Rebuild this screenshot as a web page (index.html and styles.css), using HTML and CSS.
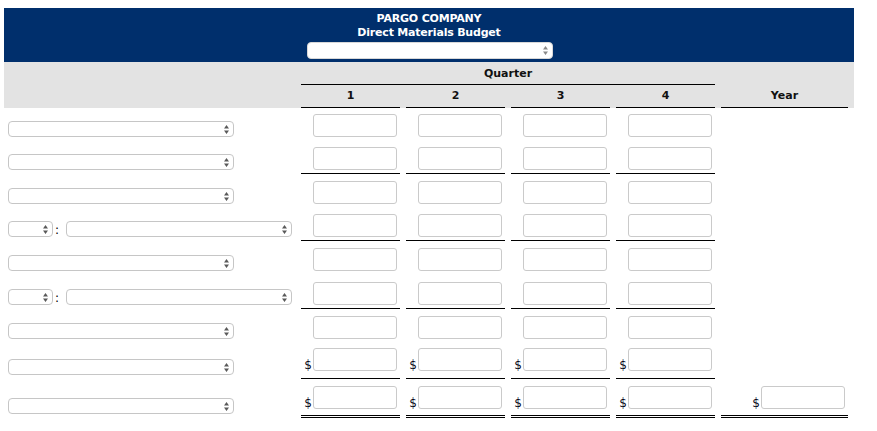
FILE: index.html
```html
<!DOCTYPE html>
<html lang="en">
<head>
<meta charset="utf-8">
<title>PARGO COMPANY - Direct Materials Budget</title>
<link rel="stylesheet" href="styles.css">
</head>
<body>
<div class="sheet">
  <div class="title-band">
    <div class="title-line">PARGO COMPANY</div>
    <div class="title-line">Direct Materials Budget</div>
    <div class="sel sel-title"><svg class="arr" width="5" height="9" viewBox="0 0 5 9"><path d="M2.5 0L5 3.6H0Z M0 5.4H5L2.5 9Z"/></svg></div>
  </div>

  <div class="grid head-band">
    <div class="quarter">Quarter</div>
    <div class="colhead c2">1</div>
    <div class="colhead c3">2</div>
    <div class="colhead c4">3</div>
    <div class="colhead c5">4</div>
    <div class="colhead c6">Year</div>
  </div>

  <!-- row 1 -->
  <div class="grid row pt6">
    <div class="lab"><div class="sel w-wide"><svg class="arr" width="5" height="9" viewBox="0 0 5 9"><path d="M2.5 0L5 3.6H0Z M0 5.4H5L2.5 9Z"/></svg></div></div>
    <div class="val"><input class="box" type="text"></div>
    <div class="val"><input class="box" type="text"></div>
    <div class="val"><input class="box" type="text"></div>
    <div class="val"><input class="box" type="text"></div>
    <div class="val yr"></div>
  </div>

  <!-- row 2 -->
  <div class="grid row pt6 rule">
    <div class="lab"><div class="sel w-wide"><svg class="arr" width="5" height="9" viewBox="0 0 5 9"><path d="M2.5 0L5 3.6H0Z M0 5.4H5L2.5 9Z"/></svg></div></div>
    <div class="val"><input class="box" type="text"></div>
    <div class="val"><input class="box" type="text"></div>
    <div class="val"><input class="box" type="text"></div>
    <div class="val"><input class="box" type="text"></div>
    <div class="val yr"></div>
  </div>

  <!-- row 3 -->
  <div class="grid row pt7">
    <div class="lab"><div class="sel w-wide"><svg class="arr" width="5" height="9" viewBox="0 0 5 9"><path d="M2.5 0L5 3.6H0Z M0 5.4H5L2.5 9Z"/></svg></div></div>
    <div class="val"><input class="box" type="text"></div>
    <div class="val"><input class="box" type="text"></div>
    <div class="val"><input class="box" type="text"></div>
    <div class="val"><input class="box" type="text"></div>
    <div class="val yr"></div>
  </div>

  <!-- row 4 -->
  <div class="grid row pt6 rule">
    <div class="lab">
      <div class="sel w-small"><svg class="arr" width="5" height="9" viewBox="0 0 5 9"><path d="M2.5 0L5 3.6H0Z M0 5.4H5L2.5 9Z"/></svg></div>
      <span class="colon">:</span>
      <div class="sel w-wide"><svg class="arr" width="5" height="9" viewBox="0 0 5 9"><path d="M2.5 0L5 3.6H0Z M0 5.4H5L2.5 9Z"/></svg></div>
    </div>
    <div class="val"><input class="box" type="text"></div>
    <div class="val"><input class="box" type="text"></div>
    <div class="val"><input class="box" type="text"></div>
    <div class="val"><input class="box" type="text"></div>
    <div class="val yr"></div>
  </div>

  <!-- row 5 -->
  <div class="grid row pt7">
    <div class="lab"><div class="sel w-wide"><svg class="arr" width="5" height="9" viewBox="0 0 5 9"><path d="M2.5 0L5 3.6H0Z M0 5.4H5L2.5 9Z"/></svg></div></div>
    <div class="val"><input class="box" type="text"></div>
    <div class="val"><input class="box" type="text"></div>
    <div class="val"><input class="box" type="text"></div>
    <div class="val"><input class="box" type="text"></div>
    <div class="val yr"></div>
  </div>

  <!-- row 6 -->
  <div class="grid row pt7 rule">
    <div class="lab">
      <div class="sel w-small"><svg class="arr" width="5" height="9" viewBox="0 0 5 9"><path d="M2.5 0L5 3.6H0Z M0 5.4H5L2.5 9Z"/></svg></div>
      <span class="colon">:</span>
      <div class="sel w-wide"><svg class="arr" width="5" height="9" viewBox="0 0 5 9"><path d="M2.5 0L5 3.6H0Z M0 5.4H5L2.5 9Z"/></svg></div>
    </div>
    <div class="val"><input class="box" type="text"></div>
    <div class="val"><input class="box" type="text"></div>
    <div class="val"><input class="box" type="text"></div>
    <div class="val"><input class="box" type="text"></div>
    <div class="val yr"></div>
  </div>

  <!-- row 7 -->
  <div class="grid row pt7">
    <div class="lab"><div class="sel w-wide"><svg class="arr" width="5" height="9" viewBox="0 0 5 9"><path d="M2.5 0L5 3.6H0Z M0 5.4H5L2.5 9Z"/></svg></div></div>
    <div class="val"><input class="box" type="text"></div>
    <div class="val"><input class="box" type="text"></div>
    <div class="val"><input class="box" type="text"></div>
    <div class="val"><input class="box" type="text"></div>
    <div class="val yr"></div>
  </div>

  <!-- row 8 -->
  <div class="grid row pt5 rule money">
    <div class="lab"><div class="sel w-wide"><svg class="arr" width="5" height="9" viewBox="0 0 5 9"><path d="M2.5 0L5 3.6H0Z M0 5.4H5L2.5 9Z"/></svg></div></div>
    <div class="val"><span class="cur">$</span><input class="box" type="text"></div>
    <div class="val"><span class="cur">$</span><input class="box" type="text"></div>
    <div class="val"><span class="cur">$</span><input class="box" type="text"></div>
    <div class="val"><span class="cur">$</span><input class="box" type="text"></div>
    <div class="val yr"></div>
  </div>

  <!-- row 9 -->
  <div class="grid row pt7 total">
    <div class="lab"><div class="sel w-wide"><svg class="arr" width="5" height="9" viewBox="0 0 5 9"><path d="M2.5 0L5 3.6H0Z M0 5.4H5L2.5 9Z"/></svg></div></div>
    <div class="val"><span class="cur">$</span><input class="box" type="text"></div>
    <div class="val"><span class="cur">$</span><input class="box" type="text"></div>
    <div class="val"><span class="cur">$</span><input class="box" type="text"></div>
    <div class="val"><span class="cur">$</span><input class="box" type="text"></div>
    <div class="val yr"><span class="cur">$</span><input class="box" type="text"></div>
  </div>
</div>
</body>
</html>
```

FILE: styles.css
```css
body {
  margin: 0;
  background: #ffffff;
  color: #000000;
  font-family: "DejaVu Sans", Verdana, sans-serif;
}

.sheet {
  margin: 8px 0 0 4px;
  width: 850px;
}

.title-band {
  background: #002f6c;
  color: #ffffff;
  height: 54px;
  box-sizing: border-box;
  padding-top: 4px;
  display: flex;
  flex-direction: column;
  align-items: center;
}

.title-line {
  font-size: 11px;
  font-weight: bold;
  line-height: 14px;
  letter-spacing: -0.2px;
}

.sel {
  box-sizing: border-box;
  height: 16px;
  border: 1px solid #c6c6c6;
  border-radius: 4px;
  background: #ffffff;
  display: flex;
  align-items: center;
  justify-content: flex-end;
  padding-right: 4px;
  flex: none;
}

.sel .arr {
  display: block;
  fill: #5a5a5a;
}

.sel-title {
  width: 246px;
  height: 17px;
  margin-top: 2px;
  margin-left: 1px;
  border-color: #d8d8d8;
}

.sel-title .arr {
  fill: #8a8a8a;
}

.w-wide {
  width: 226px;
}

.w-small {
  width: 45px;
}

.grid {
  display: grid;
  grid-template-columns: 291px repeat(4, 99px) 127px;
  column-gap: 6px;
}

.head-band {
  background: #e3e3e3;
  height: 46px;
  font-size: 11px;
  font-weight: bold;
  line-height: 14px;
  color: #111111;
}

.quarter {
  grid-column: 2 / 6;
  grid-row: 1;
  text-align: center;
  padding: 5px 0 3px;
  border-bottom: 1px solid #000000;
}

.colhead {
  grid-row: 2;
  text-align: center;
  padding: 4px 0 4px;
  border-bottom: 1px solid #000000;
}

.c2 { grid-column: 2; }
.c3 { grid-column: 3; }
.c4 { grid-column: 4; }
.c5 { grid-column: 5; }
.c6 { grid-column: 6; }

.lab {
  display: flex;
  align-items: flex-end;
  padding: 0 0 4px 4px;
}

.colon {
  box-sizing: border-box;
  width: 13px;
  padding-left: 2px;
  font-size: 12px;
  line-height: 14px;
  flex: none;
}

.val {
  display: flex;
  justify-content: flex-end;
  align-items: flex-end;
  padding: 6px 3px 3px 0;
  border-bottom: 1px solid transparent;
}

.pt5 .val { padding-top: 5px; }
.pt6 .val { padding-top: 6px; }
.pt7 .val { padding-top: 7px; }

.rule .val { border-bottom-color: #000000; }
.rule .val.yr { border-bottom-color: transparent; }

.money .val { padding-bottom: 7px; }

.total .val {
  padding-bottom: 6px;
  border-bottom: 3px double #000000;
}

.box {
  display: block;
  box-sizing: border-box;
  width: 84px;
  height: 23px;
  margin: 0;
  padding: 0 4px;
  border: 1px solid #cacaca;
  border-radius: 3px;
  background: #ffffff;
  font-family: "DejaVu Sans", Verdana, sans-serif;
  font-size: 12px;
}

.cur {
  font-size: 12px;
  line-height: 12px;
  margin-right: 1px;
  color: #0a0a1a;
}
```
